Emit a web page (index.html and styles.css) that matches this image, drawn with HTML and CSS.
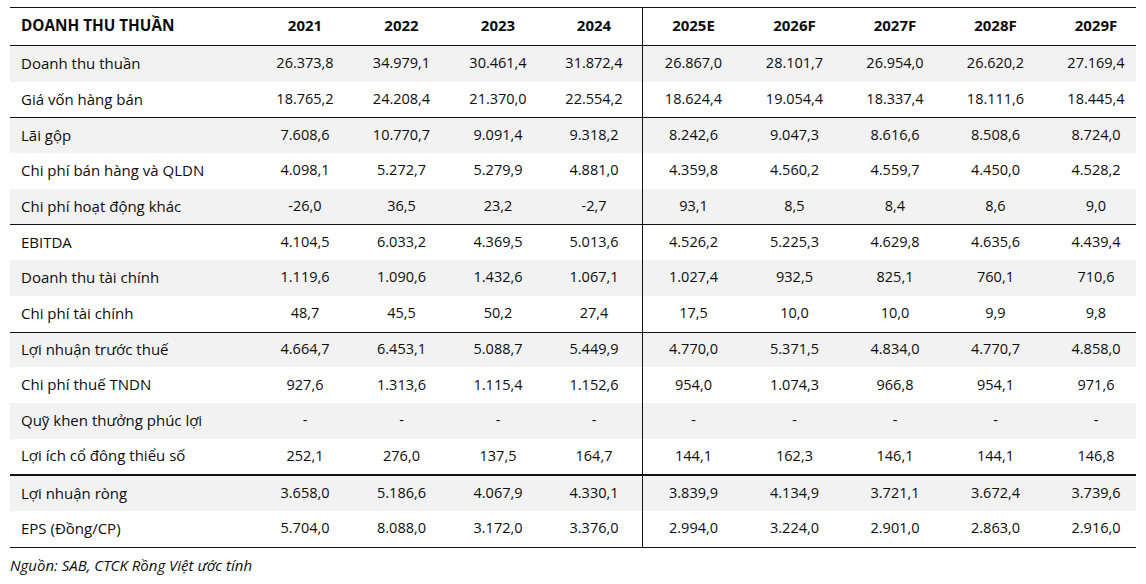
FILE: index.html
```html
<!DOCTYPE html>
<html lang="vi">
<head>
<meta charset="utf-8">
<title>Doanh thu thuần</title>
<link rel="stylesheet" href="styles.css">
</head>
<body>
<div class="report">
  <div class="tbl">
    <div class="row head">
      <div class="lbl">DOANH THU THUẦN</div>
      <div>2021</div><div>2022</div><div>2023</div><div>2024</div>
      <div class="split">2025E</div><div>2026F</div><div>2027F</div><div>2028F</div><div class="last">2029F</div>
    </div>
    <div class="row odd">
      <div class="lbl">Doanh thu thuần</div>
      <div>26.373,8</div><div>34.979,1</div><div>30.461,4</div><div>31.872,4</div>
      <div class="split">26.867,0</div><div>28.101,7</div><div>26.954,0</div><div>26.620,2</div><div class="last">27.169,4</div>
    </div>
    <div class="row">
      <div class="lbl">Giá vốn hàng bán</div>
      <div>18.765,2</div><div>24.208,4</div><div>21.370,0</div><div>22.554,2</div>
      <div class="split">18.624,4</div><div>19.054,4</div><div>18.337,4</div><div>18.111,6</div><div class="last">18.445,4</div>
    </div>
    <div class="row odd group">
      <div class="lbl">Lãi gộp</div>
      <div>7.608,6</div><div>10.770,7</div><div>9.091,4</div><div>9.318,2</div>
      <div class="split">8.242,6</div><div>9.047,3</div><div>8.616,6</div><div>8.508,6</div><div class="last">8.724,0</div>
    </div>
    <div class="row">
      <div class="lbl">Chi phí bán hàng và QLDN</div>
      <div>4.098,1</div><div>5.272,7</div><div>5.279,9</div><div>4.881,0</div>
      <div class="split">4.359,8</div><div>4.560,2</div><div>4.559,7</div><div>4.450,0</div><div class="last">4.528,2</div>
    </div>
    <div class="row odd">
      <div class="lbl">Chi phí hoạt động khác</div>
      <div>-26,0</div><div>36,5</div><div>23,2</div><div>-2,7</div>
      <div class="split">93,1</div><div>8,5</div><div>8,4</div><div>8,6</div><div class="last">9,0</div>
    </div>
    <div class="row group">
      <div class="lbl">EBITDA</div>
      <div>4.104,5</div><div>6.033,2</div><div>4.369,5</div><div>5.013,6</div>
      <div class="split">4.526,2</div><div>5.225,3</div><div>4.629,8</div><div>4.635,6</div><div class="last">4.439,4</div>
    </div>
    <div class="row odd">
      <div class="lbl">Doanh thu tài chính</div>
      <div>1.119,6</div><div>1.090,6</div><div>1.432,6</div><div>1.067,1</div>
      <div class="split">1.027,4</div><div>932,5</div><div>825,1</div><div>760,1</div><div class="last">710,6</div>
    </div>
    <div class="row">
      <div class="lbl">Chi phí tài chính</div>
      <div>48,7</div><div>45,5</div><div>50,2</div><div>27,4</div>
      <div class="split">17,5</div><div>10,0</div><div>10,0</div><div>9,9</div><div class="last">9,8</div>
    </div>
    <div class="row odd group">
      <div class="lbl">Lợi nhuận trước thuế</div>
      <div>4.664,7</div><div>6.453,1</div><div>5.088,7</div><div>5.449,9</div>
      <div class="split">4.770,0</div><div>5.371,5</div><div>4.834,0</div><div>4.770,7</div><div class="last">4.858,0</div>
    </div>
    <div class="row">
      <div class="lbl">Chi phí thuế TNDN</div>
      <div>927,6</div><div>1.313,6</div><div>1.115,4</div><div>1.152,6</div>
      <div class="split">954,0</div><div>1.074,3</div><div>966,8</div><div>954,1</div><div class="last">971,6</div>
    </div>
    <div class="row odd">
      <div class="lbl">Quỹ khen thưởng phúc lợi</div>
      <div>-</div><div>-</div><div>-</div><div>-</div>
      <div class="split">-</div><div>-</div><div>-</div><div>-</div><div class="last">-</div>
    </div>
    <div class="row">
      <div class="lbl">Lợi ích cổ đông thiểu số</div>
      <div>252,1</div><div>276,0</div><div>137,5</div><div>164,7</div>
      <div class="split">144,1</div><div>162,3</div><div>146,1</div><div>144,1</div><div class="last">146,8</div>
    </div>
    <div class="row odd thick">
      <div class="lbl">Lợi nhuận ròng</div>
      <div>3.658,0</div><div>5.186,6</div><div>4.067,9</div><div>4.330,1</div>
      <div class="split">3.839,9</div><div>4.134,9</div><div>3.721,1</div><div>3.672,4</div><div class="last">3.739,6</div>
    </div>
    <div class="row">
      <div class="lbl">EPS (Đồng/CP)</div>
      <div>5.704,0</div><div>8.088,0</div><div>3.172,0</div><div>3.376,0</div>
      <div class="split">2.994,0</div><div>3.224,0</div><div>2.901,0</div><div>2.863,0</div><div class="last">2.916,0</div>
    </div>
  </div>
  <p class="source">Nguồn: SAB, CTCK Rồng Việt ước tính</p>
</div>
</body>
</html>
```

FILE: styles.css
```css
html, body {
  margin: 0;
  padding: 0;
  background: #ffffff;
}

body {
  font-family: "Open Sans", "Noto Sans", sans-serif;
  color: #0d0d0d;
  font-size: 14.5px;
}

.report {
  padding: 7px 10px 0 10px;
  width: 1126px;
}

.tbl {
  border-top: 1px solid #111111;
  border-bottom: 1px solid #111111;
}

.row {
  display: grid;
  grid-template-columns: 247px 96px 97px 96px 96px 102px 101px 100px 101px 90px;
  height: 35.7px;
  box-sizing: border-box;
  padding-bottom: 2px;
}

.row > div {
  display: flex;
  align-items: center;
  justify-content: center;
  white-space: nowrap;
}

.row > .lbl {
  justify-content: flex-start;
  padding-left: 11px;
  font-size: 15px;
}

.row > .split {
  border-left: 1px solid #111111;
  margin-bottom: -2px;
  padding-bottom: 2px;
}

.row > .last {
  padding-left: 10px;
}

.row.head {
  height: 38px;
  font-weight: 700;
  font-size: 15px;
  padding-bottom: 3px;
  border-bottom: 1px solid #111111;
}

.row.head > .split {
  margin-bottom: -3px;
  padding-bottom: 3px;
}

.row.head > .lbl {
  font-size: 15.3px;
}

.row.odd {
  background: #f2f2f2;
}

.row.group {
  border-top: 1px solid #111111;
}

.row.thick {
  border-top: 2px solid #111111;
  height: 36.7px;
}

.source {
  margin: 7px 0 0 0;
  font-style: italic;
  font-size: 15px;
  line-height: 20px;
}
```
